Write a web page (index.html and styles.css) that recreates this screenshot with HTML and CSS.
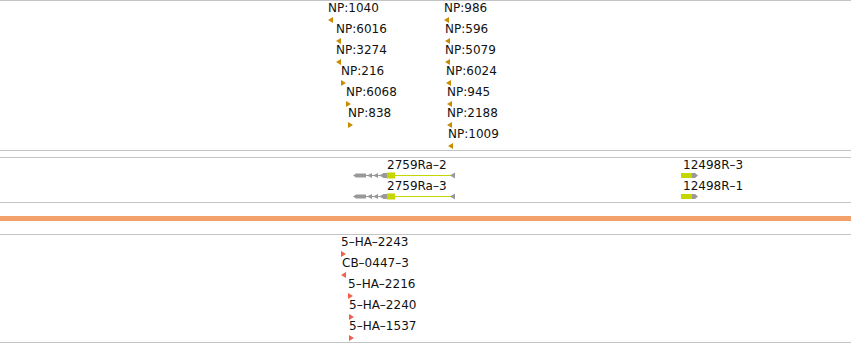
FILE: index.html
```html
<!DOCTYPE html>
<html lang="en">
<head>
    <meta charset="UTF-8">
    <title>Track view</title>
    <link rel="stylesheet" href="styles.css">
</head>
<body>

<div class="view">
    <div class="track track-np">
        <div class="feat" style="left:328px;top:0px"><span class="label">NP:1040</span><span class="arrow left np"></span></div>
        <div class="feat" style="left:336px;top:21px"><span class="label">NP:6016</span><span class="arrow left np"></span></div>
        <div class="feat" style="left:336px;top:42px"><span class="label">NP:3274</span><span class="arrow left np"></span></div>
        <div class="feat" style="left:341px;top:63px"><span class="label">NP:216</span><span class="arrow right np"></span></div>
        <div class="feat" style="left:346px;top:84px"><span class="label">NP:6068</span><span class="arrow right np"></span></div>
        <div class="feat" style="left:348px;top:105px"><span class="label">NP:838</span><span class="arrow right np"></span></div>

        <div class="feat" style="left:444px;top:0px"><span class="label">NP:986</span><span class="arrow left np"></span></div>
        <div class="feat" style="left:445px;top:21px"><span class="label">NP:596</span><span class="arrow left np"></span></div>
        <div class="feat" style="left:445px;top:42px"><span class="label">NP:5079</span><span class="arrow left np"></span></div>
        <div class="feat" style="left:446px;top:63px"><span class="label">NP:6024</span><span class="arrow left np"></span></div>
        <div class="feat" style="left:447px;top:84px"><span class="label">NP:945</span><span class="arrow left np"></span></div>
        <div class="feat" style="left:447px;top:105px"><span class="label">NP:2188</span><span class="arrow left np"></span></div>
        <div class="feat" style="left:448px;top:126px"><span class="label">NP:1009</span><span class="arrow left np"></span></div>
    </div>

    <div class="track track-genes">
        <div class="gene" style="left:353px;top:0px">
            <span class="label gene-label">2759Ra–2</span>
            <svg class="gene-glyph" width="104" height="7" viewBox="0 0 104 7">
                <polygon points="0,3.5 3,1.5 3,5.5" fill="#999"/>
                <rect x="3" y="1.5" width="10" height="4" fill="#999"/>
                <line x1="13" y1="3.5" x2="37" y2="3.5" stroke="#999" stroke-width="1"/>
                <polygon points="14,3.5 19,1 19,6" fill="#999"/>
                <polygon points="20,3.5 25,1 25,6" fill="#999"/>
                <polygon points="26,3.5 31,1 31,6" fill="#999"/>
                <rect x="30" y="1" width="4" height="5" fill="#999"/>
                <rect x="34" y="0.5" width="8" height="6" fill="#c6d600"/>
                <line x1="38" y1="3.5" x2="98" y2="3.5" stroke="#c6d600" stroke-width="1"/>
                <polygon points="97,3.5 102,0.5 102,6.5" fill="#999"/>
            </svg>
        </div>
        <div class="gene" style="left:353px;top:21px">
            <span class="label gene-label">2759Ra–3</span>
            <svg class="gene-glyph" width="104" height="7" viewBox="0 0 104 7">
                <polygon points="0,3.5 3,1.5 3,5.5" fill="#999"/>
                <rect x="3" y="1.5" width="10" height="4" fill="#999"/>
                <line x1="13" y1="3.5" x2="37" y2="3.5" stroke="#999" stroke-width="1"/>
                <polygon points="14,3.5 19,1 19,6" fill="#999"/>
                <polygon points="20,3.5 25,1 25,6" fill="#999"/>
                <polygon points="26,3.5 31,1 31,6" fill="#999"/>
                <rect x="30" y="1" width="4" height="5" fill="#999"/>
                <rect x="34" y="0.5" width="8" height="6" fill="#c6d600"/>
                <line x1="38" y1="3.5" x2="98" y2="3.5" stroke="#c6d600" stroke-width="1"/>
                <polygon points="97,3.5 102,0.5 102,6.5" fill="#999"/>
            </svg>
        </div>
        <div class="gene" style="left:681px;top:0px">
            <span class="label gene-label small-gene">12498R–3</span>
            <svg class="gene-glyph" width="18" height="7" viewBox="0 0 18 7">
                <rect x="0" y="1" width="11" height="5" fill="#c6d600"/>
                <polygon points="11,1 14,1 17,3.5 14,6 11,6" fill="#999"/>
            </svg>
        </div>
        <div class="gene" style="left:681px;top:21px">
            <span class="label gene-label small-gene">12498R–1</span>
            <svg class="gene-glyph" width="18" height="7" viewBox="0 0 18 7">
                <rect x="0" y="1" width="11" height="5" fill="#c6d600"/>
                <polygon points="11,1 14,1 17,3.5 14,6 11,6" fill="#999"/>
            </svg>
        </div>
    </div>

    <div class="divider"></div>

    <div class="track track-ha">
        <div class="feat" style="left:341px;top:0px"><span class="label">5–HA–2243</span><span class="arrow right ha"></span></div>
        <div class="feat" style="left:341px;top:21px"><span class="label label-shift">CB–0447–3</span><span class="arrow left ha"></span></div>
        <div class="feat" style="left:348px;top:42px"><span class="label">5–HA–2216</span><span class="arrow right ha"></span></div>
        <div class="feat" style="left:349px;top:63px"><span class="label">5–HA–2240</span><span class="arrow right ha"></span></div>
        <div class="feat" style="left:349px;top:84px"><span class="label">5–HA–1537</span><span class="arrow right ha"></span></div>
    </div>
</div>

</body>
</html>
```

FILE: styles.css
```css
body {
    margin: 0;
    background: #fff;
    font-family: "DejaVu Sans", sans-serif;
    font-size: 12px;
    color: #111;
}

.view {
    width: 851px;
    height: 343px;
    overflow: hidden;
}

.track {
    position: relative;
    border-top: 1px solid #c4c4c4;
    border-bottom: 1px solid #c4c4c4;
}

.track-np {
    height: 149px;
    margin-bottom: 6px;
}

.track-genes {
    height: 44px;
}

.divider {
    height: 5px;
    margin: 13px 0;
    background: #f4a06c;
}

.track-ha {
    height: 107px;
}

.feat,
.gene {
    position: absolute;
    display: flex;
    flex-direction: column;
    align-items: flex-start;
}

.label {
    display: block;
    line-height: 14px;
    white-space: nowrap;
}

.label-shift {
    margin-left: 1px;
}

.arrow {
    display: block;
    width: 0;
    height: 0;
    margin-top: 2px;
    border-top: 3px solid transparent;
    border-bottom: 3px solid transparent;
}

.arrow.left.np { border-right: 5px solid #c98b00; }
.arrow.right.np { border-left: 5px solid #c98b00; }
.arrow.left.ha { border-right: 5px solid #f0604a; }
.arrow.right.ha { border-left: 5px solid #f0604a; }

.gene-label {
    margin-left: 34px;
}

.gene-label.small-gene {
    margin-left: 2px;
}

.gene-glyph {
    display: block;
    margin-top: 0;
}
```
